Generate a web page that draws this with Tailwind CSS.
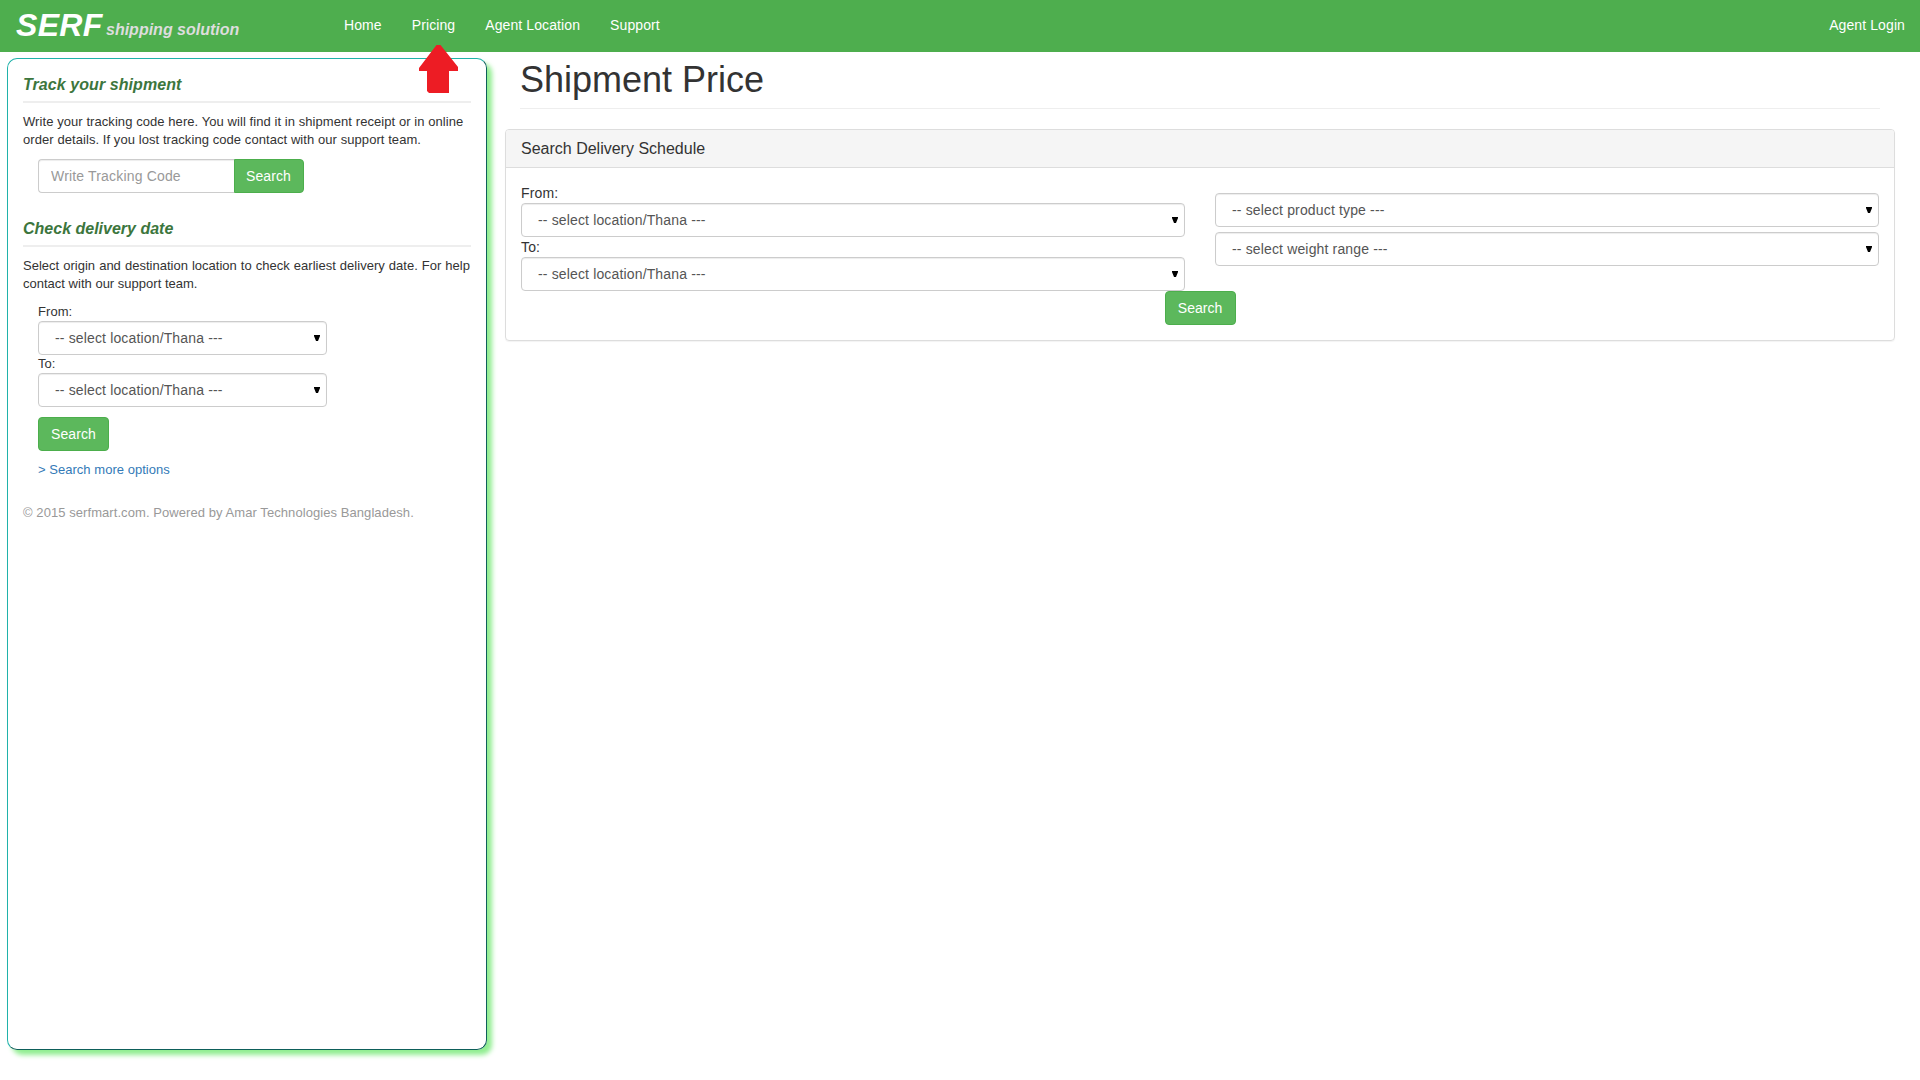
<!DOCTYPE html>
<html lang="en">
<head>
<meta charset="utf-8">
<title>SERF shipping solution</title>
<script src="https://cdn.jsdelivr.net/npm/@tailwindcss/browser@4"></script>
</head>
<body class="relative h-screen overflow-hidden bg-white font-['Liberation_Sans',Arial,sans-serif] text-sm leading-5 text-[#333]">
<nav class="flex h-[52px] bg-[#4eae4e] text-white">
  <a class="flex w-[312px] items-start whitespace-nowrap pl-4 pt-1 font-bold italic"><span class="w-[90px] text-[32px] leading-[42px] tracking-[0.3px]">SERF</span><span class="pt-[16px] text-base leading-5 text-[#ddd]">shipping solution</span></a>
  <div class="flex flex-1 pl-[17px] pt-[15px] tracking-[0.1px]">
    <a class="px-[15px]">Home</a><a class="px-[15px]">Pricing</a><a class="px-[15px]">Agent Location</a><a class="px-[15px]">Support</a>
    <a class="ml-auto pr-[15px]">Agent Login</a>
  </div>
</nav>
<svg class="absolute left-[419px] top-[45px]" width="39" height="48" viewBox="0 0 39 48"><path fill="#ed1c24" d="M17.5 0h4L39 22v4h-9v22H10l-2-2V26H0v-3z"/></svg>
<div class="flex items-start">
  <aside class="ml-[7px] mt-[6px] h-[992px] w-[480px] shrink-0 rounded-[10px] border border-t-[#20b2aa] border-l-[#20b2aa] border-r-[#0e5f5a] border-b-[#0e5f5a] px-[15px] pt-[16px] text-[13px] leading-[18px] tracking-[0.07px] shadow-[5px_5px_5px_#90ee90]">
    <h2 class="text-base font-bold italic leading-5 text-[#3c763d]">Track your shipment</h2>
    <hr class="mt-[6px] border-t-2 border-[#eee]">
    <p class="mt-[10px]">Write your tracking code here. You will find it in shipment receipt or in online order details. If you lost tracking code contact with our support team.</p>
    <div class="ml-[15px] mt-[10px] flex h-[34px] text-sm">
      <input class="w-[196px] rounded-l border border-r-0 border-[#ccc] px-3 tracking-[0.17px] shadow-[inset_0_1px_1px_rgba(0,0,0,0.075)] placeholder:text-[#999]" placeholder="Write Tracking Code">
      <button class="w-[70px] rounded-r border border-[#4cae4c] bg-[#5cb85c] pr-px text-white">Search</button>
    </div>
    <h2 class="mt-[26px] text-base font-bold italic leading-5 tracking-normal text-[#3c763d]">Check delivery date</h2>
    <hr class="mt-[6px] border-t-2 border-[#eee]">
    <p class="mt-[10px] mr-[1px] text-justify tracking-[0.01px]">Select origin and destination location to check earliest delivery date. For help contact with our support team.</p>
    <div class="ml-[15px] mt-[10px]">
      <div>From:</div>
      <div class="relative h-[34px] w-[289px]">
        <select class="size-full appearance-none rounded border border-[#ccc] bg-white px-4 text-sm tracking-[0.15px] text-[#555] shadow-[inset_0_1px_1px_rgba(0,0,0,0.075)]"><option>-- select location/Thana ---</option></select>
        <svg class="pointer-events-none absolute right-[7px] top-[14px]" width="6" height="6"><path d="M0 0h6v1L4 6H2L0 1z"/></svg>
      </div>
      <div>To:</div>
      <div class="relative h-[34px] w-[289px]">
        <select class="size-full appearance-none rounded border border-[#ccc] bg-white px-4 text-sm tracking-[0.15px] text-[#555] shadow-[inset_0_1px_1px_rgba(0,0,0,0.075)]"><option>-- select location/Thana ---</option></select>
        <svg class="pointer-events-none absolute right-[7px] top-[14px]" width="6" height="6"><path d="M0 0h6v1L4 6H2L0 1z"/></svg>
      </div>
      <button class="mt-[10px] block h-[34px] w-[71px] rounded border border-[#4cae4c] bg-[#5cb85c] text-sm text-white">Search</button>
      <a class="mt-[10px] block tracking-[0.03px] text-[#337ab7]">&gt; Search more options</a>
    </div>
    <p class="mt-[25px] text-[#999]">© 2015 serfmart.com. Powered by Amar Technologies Bangladesh.</p>
  </aside>
  <main class="ml-[18px] w-[1390px]">
    <h1 class="mx-[15px] border-b border-[#eee] pb-[8px] pt-[8px] text-4xl leading-10 font-normal">Shipment Price</h1>
    <section class="mt-5 h-[212px] rounded border border-[#ddd] shadow-[0_1px_1px_rgba(0,0,0,0.05)]">
      <h3 class="h-[38px] rounded-t-[3px] border-b border-[#ddd] bg-[#f5f5f5] px-[15px] pt-[9px] text-base leading-5">Search Delivery Schedule</h3>
      <div class="grid grid-cols-2 gap-[30px] px-[15px] pt-[15px] tracking-[0.15px]">
        <div>
          <div>From:</div>
          <div class="relative h-[34px]">
            <select class="size-full appearance-none rounded border border-[#ccc] bg-white px-4 text-[#555] shadow-[inset_0_1px_1px_rgba(0,0,0,0.075)]"><option>-- select location/Thana ---</option></select>
            <svg class="pointer-events-none absolute right-[7px] top-[14px]" width="6" height="6"><path d="M0 0h6v1L4 6H2L0 1z"/></svg>
          </div>
          <div>To:</div>
          <div class="relative h-[34px]">
            <select class="size-full appearance-none rounded border border-[#ccc] bg-white px-4 text-[#555] shadow-[inset_0_1px_1px_rgba(0,0,0,0.075)]"><option>-- select location/Thana ---</option></select>
            <svg class="pointer-events-none absolute right-[7px] top-[14px]" width="6" height="6"><path d="M0 0h6v1L4 6H2L0 1z"/></svg>
          </div>
        </div>
        <div class="flex flex-col gap-[5px] pt-[10px]">
          <div class="relative h-[34px]">
            <select class="size-full appearance-none rounded border border-[#ccc] bg-white px-4 text-[#555] shadow-[inset_0_1px_1px_rgba(0,0,0,0.075)]"><option>-- select product type ---</option></select>
            <svg class="pointer-events-none absolute right-[7px] top-[14px]" width="6" height="6"><path d="M0 0h6v1L4 6H2L0 1z"/></svg>
          </div>
          <div class="relative h-[34px]">
            <select class="size-full appearance-none rounded border border-[#ccc] bg-white px-4 text-[#555] shadow-[inset_0_1px_1px_rgba(0,0,0,0.075)]"><option>-- select weight range ---</option></select>
            <svg class="pointer-events-none absolute right-[7px] top-[14px]" width="6" height="6"><path d="M0 0h6v1L4 6H2L0 1z"/></svg>
          </div>
        </div>
      </div>
      <button class="mx-auto block h-[34px] w-[71px] rounded border border-[#4cae4c] bg-[#5cb85c] text-white">Search</button>
    </section>
  </main>
</div>
</body>
</html>
